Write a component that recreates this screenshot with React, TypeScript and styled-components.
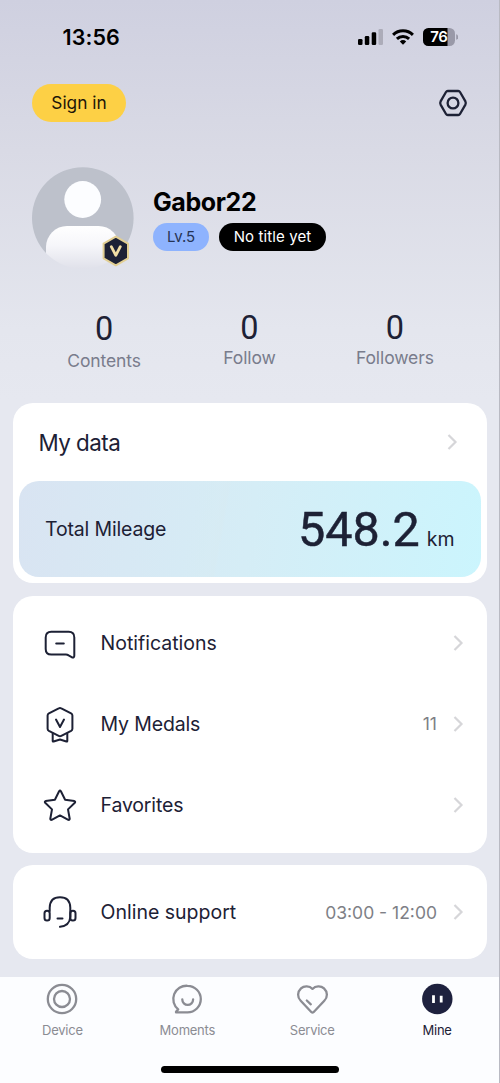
import React from "react";
import styled, { createGlobalStyle } from "styled-components";

const ink = "#1d2135";

const GlobalStyle = createGlobalStyle`
  * { box-sizing: border-box; }
  body {
    margin: 0;
    font-family: Inter, "Liberation Sans", sans-serif;
    color: ${ink};
  }
`;

const Screen = styled.div`
  display: flex;
  flex-direction: column;
  width: 500px;
  height: 1083px;
  overflow: hidden;
  border-right: 1px solid #b9bac3;
  background: linear-gradient(180deg, #cfd0e0 0, #d9dae5 150px, #e4e6ee 330px, #e6e8f0 400px);
`;

const StatusBar = styled.div`
  display: flex;
  align-items: center;
  justify-content: space-between;
  height: 74px;
  padding: 0 41px 0 62.5px;
`;

const Clock = styled.span`
  font-size: 21.5px;
  font-weight: 600;
  line-height: 30px;
  letter-spacing: 0.1px;
  color: #000;
`;

const TopActions = styled.div`
  display: flex;
  align-items: center;
  justify-content: space-between;
  height: 38px;
  margin-top: 10px;
  padding: 0 31px 0 32px;
`;

const SignIn = styled.button`
  width: 94px;
  height: 38px;
  padding: 0;
  border: 0;
  border-radius: 19px;
  background: #fdd045;
  color: #1c1608;
  font: 400 17.3px/38px Inter, sans-serif;
`;

const Profile = styled.section`
  display: flex;
  height: 102px;
  margin-top: 44.5px;
  padding-left: 32px;
`;

const Identity = styled.div`
  display: flex;
  flex-direction: column;
  margin-left: 19px;
  padding-top: 20px;
`;

const Name = styled.h1`
  margin: 0;
  font-size: 25px;
  font-weight: 700;
  line-height: 31px;
  letter-spacing: -0.4px;
  color: #000;
`;

const Badges = styled.div`
  display: flex;
  gap: 10px;
  margin-top: 5px;
`;

const Pill = styled.span<{ $dark?: boolean }>`
  width: ${(p) => (p.$dark ? 107 : 56)}px;
  height: 28px;
  border-radius: 14px;
  background: ${(p) => (p.$dark ? "#000" : "#8eb3fe")};
  color: ${(p) => (p.$dark ? "#fff" : "#263455")};
  font-size: 15px;
  line-height: 28px;
  text-align: center;
  letter-spacing: ${(p) => (p.$dark ? 0.1 : -0.1)}px;
`;

const Stats = styled.section`
  display: flex;
  justify-content: center;
  height: 134.5px;
  padding: 43px 0 0;
`;

const Stat = styled.div<{ $drop?: number }>`
  display: flex;
  flex-direction: column;
  align-items: center;
  width: 145.4px;
  padding-top: ${(p) => p.$drop ?? 0}px;
`;

const StatValue = styled.span`
  font-family: Roboto, sans-serif;
  font-size: 32.5px;
  line-height: 32px;
`;

const StatLabel = styled.span<{ $gap?: number }>`
  margin-top: ${(p) => p.$gap ?? 2}px;
  font-size: 17.5px;
  line-height: 24px;
  letter-spacing: -0.1px;
  color: #797c8c;
`;

const Card = styled.section<{ $h: number; $pad: string }>`
  display: flex;
  flex-direction: column;
  flex: none;
  height: ${(p) => p.$h}px;
  margin: 0 12px 12.5px 13px;
  padding: ${(p) => p.$pad};
  border-radius: 20px;
  background: #fff;
`;

const CardHeader = styled.div`
  display: flex;
  align-items: center;
  justify-content: space-between;
  height: 78px;
  padding: 0 23px 0 19.5px;
  font-size: 22.4px;
  letter-spacing: -0.55px;
`;

const Mileage = styled.div`
  display: flex;
  align-items: center;
  justify-content: space-between;
  height: 95.5px;
  padding: 0 26px;
  border-radius: 20px;
  background:
    linear-gradient(100deg, transparent 37%, rgba(215, 235, 243, 0.7) 44%, transparent 44.5%),
    linear-gradient(98deg, #d9e4f2 0%, #d5edf6 50%, #cbf5fd 100%);
`;

const MileageLabel = styled.span`
  font-size: 19.5px;
  letter-spacing: -0.15px;
`;

const MileageValue = styled.span`
  display: flex;
  align-items: baseline;
  gap: 7px;
  padding-top: 2px;
`;

const Amount = styled.span`
  font-family: Roboto, sans-serif;
  font-size: 48.5px;
  line-height: 58px;
  -webkit-text-stroke: 0.5px ${ink};
`;

const Unit = styled.span`
  font-size: 19.5px;
`;

const Row = styled.div`
  display: flex;
  align-items: center;
  height: 81.3px;
  padding: 0 23px 0 30px;
`;

const RowLabel = styled.span<{ $ls: number }>`
  flex: 1;
  margin-left: 23.5px;
  font-size: 19.5px;
  letter-spacing: ${(p) => p.$ls}px;
`;

const RowDetail = styled.span`
  margin-right: 16px;
  font-size: 17.5px;
  color: #7e7f86;
`;

const TabBar = styled.nav`
  display: flex;
  flex: none;
  height: 78px;
  margin-top: 5px;
  background: #fcfdff;
`;

const Tab = styled.div<{ $active?: boolean }>`
  display: flex;
  flex: none;
  flex-direction: column;
  align-items: center;
  width: 124.9px;
  padding-top: 5px;
  color: ${(p) => (p.$active ? ink : "#8b8c93")};
  font-size: 13px;
  line-height: 18px;
  letter-spacing: -0.25px;
  svg { margin-bottom: 5px; }
`;

const HomeArea = styled.div`
  display: flex;
  flex: 1;
  justify-content: center;
  padding-top: 11px;
  background: #fcfdff;
`;

const HomeIndicator = styled.div`
  width: 178px;
  height: 7px;
  border-radius: 4px;
  background: #000;
`;

const Chevron = () => (
  <svg width="11" height="18" viewBox="0 0 11 18" fill="none" stroke="#d6d6d9" strokeWidth="2.2">
    <path d="M1.5 2l7 7-7 7" />
  </svg>
);

const StatusIcons = () => (
  <svg width="100" height="20" viewBox="0 0 100 20">
    <rect x="0" y="12" width="4.5" height="6" rx="1.3" />
    <rect x="6.8" y="9" width="4.5" height="9" rx="1.3" />
    <rect x="13.7" y="5.3" width="4.5" height="12.7" rx="1.3" />
    <rect x="20.5" y="2" width="4.5" height="16" rx="1.3" fill="#acacb9" />
    <g fill="none" stroke="#000" strokeWidth="3">
      <path d="M35.1 7.8a14.2 14.2 0 0 1 19.8 0" />
      <path d="M38.9 11.9a8.8 8.8 0 0 1 12.2 0" />
    </g>
    <path d="M45 17.7l-3.2-3.1a4.7 4.7 0 0 1 6.4 0z" />
    <clipPath id="cell"><rect x="65" y="1" width="32" height="18" rx="5.5" /></clipPath>
    <g clipPath="url(#cell)">
      <rect x="65" y="1" width="32" height="18" fill="#9999a8" />
      <rect x="65" y="1" width="24.5" height="18" />
    </g>
    <path d="M98.2 7.3q2 .5 2 2.7t-2 2.7z" fill="#9999a8" />
    <text x="80.9" y="15.3" textAnchor="middle" fontFamily="Inter, sans-serif" fontSize="15" fontWeight="600" letterSpacing="-0.3" fill="#fff">76</text>
  </svg>
);

const SettingsIcon = () => (
  <svg width="30" height="28" viewBox="0 0 30 28" fill="none" stroke={ink} strokeWidth="2.3">
    <path d="M9.8 2h10.4q1.2 0 1.8 1l5.4 9.4q.8 1.6 0 3.2L22 25q-.6 1-1.8 1H9.8q-1.2 0-1.8-1l-5.4-9.4q-.8-1.6 0-3.2L8 3q.6-1 1.8-1z" />
    <circle cx="15" cy="14" r="5.4" />
  </svg>
);

const Avatar = () => (
  <svg width="102" height="102" viewBox="0 0 102 102">
    <defs>
      <linearGradient id="body" x1="0" y1="59" x2="0" y2="102" gradientUnits="userSpaceOnUse">
        <stop offset="0" stopColor="#fff" />
        <stop offset=".45" stopColor="#f6f6fa" />
        <stop offset="1" stopColor="#e0e1ea" />
      </linearGradient>
      <clipPath id="disc"><circle cx="50.8" cy="51" r="50.8" /></clipPath>
    </defs>
    <g clipPath="url(#disc)">
      <path d="M0 0h102v102H87V82H14v20H0z" fill="#bdc1cb" />
      <rect x="14" y="59" width="73.5" height="60" rx="21" fill="url(#body)" />
    </g>
    <circle cx="50.7" cy="32.5" r="18.4" fill="#fcfdff" />
    <path d="M83.8 69.7l12.2 7v14.6l-12.2 7-12.2-7V76.7z" fill={ink} stroke="#e2cf93" strokeWidth="2" strokeLinejoin="round" />
    <path d="M79.3 79.7l4.5 8.6 4.5-8.6" fill="none" stroke="#f1dda4" strokeWidth="2.8" strokeLinecap="round" strokeLinejoin="round" />
  </svg>
);

const LineIcon = styled.svg.attrs({ width: 34, height: 38, viewBox: "0 0 34 38" })`
  fill: none;
  stroke: ${ink};
  stroke-width: 2;
  stroke-linecap: round;
  stroke-linejoin: round;
`;

const MessageIcon = () => (
  <LineIcon>
    <path d="M8.3 7.8h17.4q5.6 0 5.6 5.6v18.2q0 2.3-2.2 1.8l-3.5-2q-1.2-.9-2.7-.9H8.3q-5.6 0-5.6-5.6V13.4q0-5.6 5.6-5.6zM13.2 19.6h7.6" />
  </LineIcon>
);

const MedalIcon = () => (
  <LineIcon>
    <path d="M15.7 3.3q1.3-.7 2.6 0l9.8 5q1.3.7 1.3 2.2v13.2q0 1.5-1.3 2.2l-9.8 5q-1.3.7-2.6 0l-9.8-5q-1.3-.7-1.3-2.2V10.500q0-1.500 1.300-2.200z" />
    <path d="M13 14.6l4 7.4 4-7.4M9.7 28.5V36q0 .8.9.5L17 34.5l6.4 2q.9.3.9-.5v-7.500" />
  </LineIcon>
);

const StarIcon = () => (
  <LineIcon>
    <path d="M16.1 5.2q.9-1.3 1.8 0l4.2 8.5 9.3 1.4q1.3.5.4 1.7L25 23.4l1.7 9.4q0 1.4-1.4 1L17 29.4l-8.300 4.400q-1.400.4-1.400-1L9 23.400l-6.800-6.600q-.9-1.200.4-1.700l9.300-1.400z" />
  </LineIcon>
);

const HeadsetIcon = () => (
  <LineIcon>
    <rect x="1.5" y="17.8" width="5.2" height="9.8" rx="2.5" />
    <rect x="27.3" y="17.8" width="5.2" height="9.8" rx="2.5" />
    <path d="M6.7 18v-3.3Q7 4.3 17 4.3t10.3 10.4V24q-.8 9-10.3 9.800M14.500 25.400h5" />
  </LineIcon>
);

const TabIcon = styled.svg.attrs({ width: 34, height: 34, viewBox: "0 0 34 34" })`
  fill: none;
  stroke: #8b8c93;
  stroke-width: 2.3;
  stroke-linecap: round;
  stroke-linejoin: round;
`;

const items = [
  { label: "Notifications", icon: <MessageIcon />, ls: 0 },
  { label: "My Medals", icon: <MedalIcon />, ls: -0.15, detail: "11" },
  { label: "Favorites", icon: <StarIcon />, ls: -0.15 },
];

export default function App() {
  return (
    <Screen>
      <GlobalStyle />
      <StatusBar>
        <Clock>13:56</Clock>
        <StatusIcons />
      </StatusBar>
      <TopActions>
        <SignIn>Sign in</SignIn>
        <SettingsIcon />
      </TopActions>
      <Profile>
        <Avatar />
        <Identity>
          <Name>Gabor22</Name>
          <Badges>
            <Pill>Lv.5</Pill>
            <Pill $dark>No title yet</Pill>
          </Badges>
        </Identity>
      </Profile>
      <Stats>
        <Stat $drop={1}>
          <StatValue>0</StatValue>
          <StatLabel $gap={4}>Contents</StatLabel>
        </Stat>
        <Stat>
          <StatValue>0</StatValue>
          <StatLabel>Follow</StatLabel>
        </Stat>
        <Stat>
          <StatValue>0</StatValue>
          <StatLabel>Followers</StatLabel>
        </Stat>
      </Stats>
      <Card $h={180} $pad="0 6.5px 0 6px">
        <CardHeader>
          My data
          <Chevron />
        </CardHeader>
        <Mileage>
          <MileageLabel>Total Mileage</MileageLabel>
          <MileageValue>
            <Amount>548.2</Amount>
            <Unit>km</Unit>
          </MileageValue>
        </Mileage>
      </Card>
      <Card $h={257} $pad="6.5px 0">
        {items.map((item) => (
          <Row key={item.label}>
            {item.icon}
            <RowLabel $ls={item.ls}>{item.label}</RowLabel>
            {item.detail && <RowDetail>{item.detail}</RowDetail>}
            <Chevron />
          </Row>
        ))}
      </Card>
      <Card $h={94} $pad="6.5px 0">
        <Row>
          <HeadsetIcon />
          <RowLabel $ls={0}>Online support</RowLabel>
          <RowDetail>03:00 - 12:00</RowDetail>
          <Chevron />
        </Row>
      </Card>
      <TabBar>
        <Tab>
          <TabIcon>
            <circle cx="17" cy="17" r="14.2" />
            <circle cx="17" cy="17" r="8" />
          </TabIcon>
          Device
        </Tab>
        <Tab>
          <TabIcon>
            <path d="M17.5 3.8a13.3 13.3 0 0 1 0 26.6H6.6q-1 0-.4-.9l2-2.1A13.3 13.3 0 0 1 17.5 3.8zM12.3 17.5a5.4 5.4 0 0 0 10.8 0" />
          </TabIcon>
          Moments
        </Tab>
        <Tab>
          <TabIcon>
            <path d="M17.5 6.9c3-3.3 8.4-3.5 11.5-.5 3.8 3.6 3.8 8.9.3 12.4L18.5 30.2q-1 .9-2 0L5.7 18.8C2.2 15.3 2.2 10 6 6.4c3.1-3 8.5-2.8 11.5.5zM11.8 18.5l4 3.8" />
          </TabIcon>
          Service
        </Tab>
        <Tab $active>
          <TabIcon>
            <circle cx="17.3" cy="17" r="15.2" fill="#1e213e" stroke="none" />
            <path d="M13.5 13.3v7.6M21.2 13.8v6.6" stroke="#fff" strokeWidth="2.8" strokeLinecap="butt" />
          </TabIcon>
          Mine
        </Tab>
      </TabBar>
      <HomeArea>
        <HomeIndicator />
      </HomeArea>
    </Screen>
  );
}
